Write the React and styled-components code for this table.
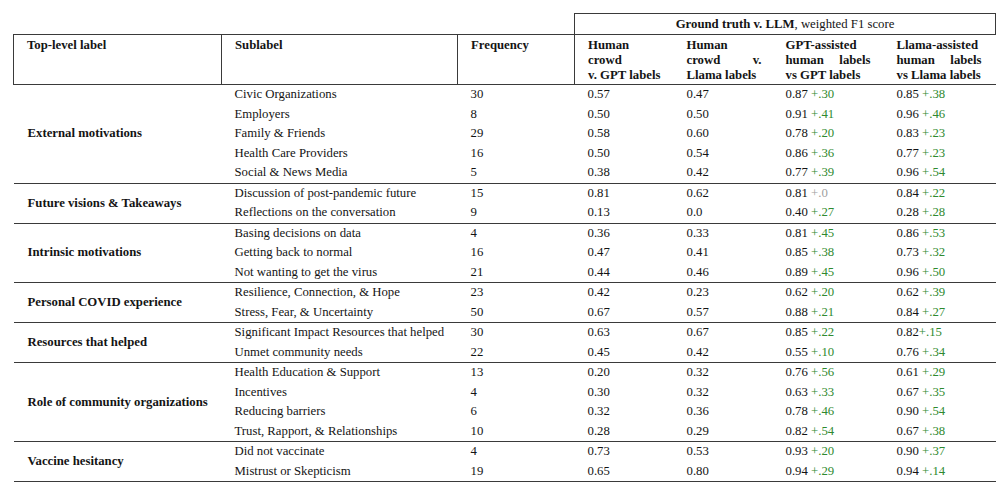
import React from 'react';
import styled, { createGlobalStyle } from 'styled-components';

const GlobalStyle = createGlobalStyle`
  html, body {
    margin: 0;
    padding: 0;
    background: #fff;
  }
  body {
    font-family: 'Liberation Serif', 'Times New Roman', serif;
    color: #141414;
  }
`;

const LINE = '1px solid #3a3a3a';

const Page = styled.div`
  padding: 13px 0 0 13px;
`;

const Table = styled.table`
  width: 982px;
  table-layout: fixed;
  border-collapse: collapse;
  font-size: 12.75px;
`;

const Col = styled.col`
  width: ${(p) => p.$w}px;
`;

const TitleCell = styled.th`
  border: ${LINE};
  height: 20px;
  padding: 0;
  text-align: center;
  font-weight: normal;
  line-height: 20px;

  b {
    font-weight: bold;
  }
`;

const HeadCell = styled.th`
  border-top: ${LINE};
  border-bottom: ${LINE};
  border-left: ${(p) => (p.$first ? LINE : 'none')};
  border-right: ${(p) => (p.$divider ? LINE : 'none')};
  height: 46px;
  padding: 3px 0 0 13px;
  vertical-align: top;
  text-align: left;
  font-weight: bold;
  line-height: 15px;
`;

const HeadLines = styled.div`
  width: ${(p) => p.$w}px;
`;

const HeadLine = styled.div`
  display: flex;
  justify-content: ${(p) => (p.$justify ? 'space-between' : 'flex-start')};
  white-space: nowrap;
`;

const Row = styled.tr`
  border-bottom: ${(p) => (p.$last ? LINE : 'none')};
`;

const GroupCell = styled.td`
  padding: 0 0 0 14px;
  vertical-align: middle;
  font-weight: bold;
  white-space: nowrap;
`;

const Cell = styled.td`
  height: 19.5px;
  padding: 0 0 0 13px;
  line-height: 19.5px;
  white-space: nowrap;
  vertical-align: middle;
`;

const Delta = styled.span`
  color: ${(p) => (p.$zero ? '#a0a0a0' : '#2f8a2f')};
`;

const groups = [
  {
    label: 'External motivations',
    rows: [
      ['Civic Organizations', '30', '0.57', '0.47', '0.87 +.30', '0.85 +.38'],
      ['Employers', '8', '0.50', '0.50', '0.91 +.41', '0.96 +.46'],
      ['Family & Friends', '29', '0.58', '0.60', '0.78 +.20', '0.83 +.23'],
      ['Health Care Providers', '16', '0.50', '0.54', '0.86 +.36', '0.77 +.23'],
      ['Social & News Media', '5', '0.38', '0.42', '0.77 +.39', '0.96 +.54'],
    ],
  },
  {
    label: 'Future visions & Takeaways',
    rows: [
      ['Discussion of post-pandemic future', '15', '0.81', '0.62', '0.81 +.0', '0.84 +.22'],
      ['Reflections on the conversation', '9', '0.13', '0.0', '0.40 +.27', '0.28 +.28'],
    ],
  },
  {
    label: 'Intrinsic motivations',
    rows: [
      ['Basing decisions on data', '4', '0.36', '0.33', '0.81 +.45', '0.86 +.53'],
      ['Getting back to normal', '16', '0.47', '0.41', '0.85 +.38', '0.73 +.32'],
      ['Not wanting to get the virus', '21', '0.44', '0.46', '0.89 +.45', '0.96 +.50'],
    ],
  },
  {
    label: 'Personal COVID experience',
    rows: [
      ['Resilience, Connection, & Hope', '23', '0.42', '0.23', '0.62 +.20', '0.62 +.39'],
      ['Stress, Fear, & Uncertainty', '50', '0.67', '0.57', '0.88 +.21', '0.84 +.27'],
    ],
  },
  {
    label: 'Resources that helped',
    rows: [
      ['Significant Impact Resources that helped', '30', '0.63', '0.67', '0.85 +.22', '0.82+.15'],
      ['Unmet community needs', '22', '0.45', '0.42', '0.55 +.10', '0.76 +.34'],
    ],
  },
  {
    label: 'Role of community organizations',
    rows: [
      ['Health Education & Support', '13', '0.20', '0.32', '0.76 +.56', '0.61 +.29'],
      ['Incentives', '4', '0.30', '0.32', '0.63 +.33', '0.67 +.35'],
      ['Reducing barriers', '6', '0.32', '0.36', '0.78 +.46', '0.90 +.54'],
      ['Trust, Rapport, & Relationships', '10', '0.28', '0.29', '0.82 +.54', '0.67 +.38'],
    ],
  },
  {
    label: 'Vaccine hesitancy',
    rows: [
      ['Did not vaccinate', '4', '0.73', '0.53', '0.93 +.20', '0.90 +.37'],
      ['Mistrust or Skepticism', '19', '0.65', '0.80', '0.94 +.29', '0.94 +.14'],
    ],
  },
];

const modelHeads = [
  { w: 75, lines: [['Human'], ['crowd'], ['v. GPT labels']] },
  { w: 75, lines: [['Human'], ['crowd', 'v.'], ['Llama labels']] },
  { w: 85, lines: [['GPT-assisted'], ['human', 'labels'], ['vs GPT labels']] },
  { w: 85, lines: [['Llama-assisted'], ['human', 'labels'], ['vs Llama labels']] },
];

const Score = ({ value }) => {
  const m = value.match(/^([\d.]+)(\s?)(\+\.\d+)$/);
  if (!m) return value;
  return (
    <>
      {m[1]}
      {m[2]}
      <Delta $zero={m[3] === '+.0'}>{m[3]}</Delta>
    </>
  );
};

const App = () => {
  return (
    <Page>
      <GlobalStyle />
      <Table>
        <colgroup>
          <Col $w={208} />
          <Col $w={236} />
          <Col $w={117} />
          <Col $w={99} />
          <Col $w={99} />
          <Col $w={111} />
          <Col $w={112} />
        </colgroup>
        <thead>
          <tr>
            <th colSpan={3} />
            <TitleCell colSpan={4}>
              <b>Ground truth v. LLM</b>, weighted F1 score
            </TitleCell>
          </tr>
          <tr>
            <HeadCell $first $divider>Top-level label</HeadCell>
            <HeadCell $divider>Sublabel</HeadCell>
            <HeadCell $divider>Frequency</HeadCell>
            {modelHeads.map((h, i) => (
              <HeadCell key={i}>
                <HeadLines $w={h.w}>
                  {h.lines.map((words, j) => (
                    <HeadLine key={j} $justify={words.length > 1 && j === 1}>
                      {words.length > 1 && j === 1
                        ? words.map((w) => <span key={w}>{w}</span>)
                        : words.join(' ')}
                    </HeadLine>
                  ))}
                </HeadLines>
              </HeadCell>
            ))}
          </tr>
        </thead>
        <tbody>
          {groups.map((g) =>
            g.rows.map((r, i) => (
              <Row key={g.label + i} $last={i === g.rows.length - 1}>
                {i === 0 && <GroupCell rowSpan={g.rows.length}>{g.label}</GroupCell>}
                <Cell>{r[0]}</Cell>
                <Cell>{r[1]}</Cell>
                <Cell>{r[2]}</Cell>
                <Cell>{r[3]}</Cell>
                <Cell>
                  <Score value={r[4]} />
                </Cell>
                <Cell>
                  <Score value={r[5]} />
                </Cell>
              </Row>
            )),
          )}
        </tbody>
      </Table>
    </Page>
  );
};

export default App;
